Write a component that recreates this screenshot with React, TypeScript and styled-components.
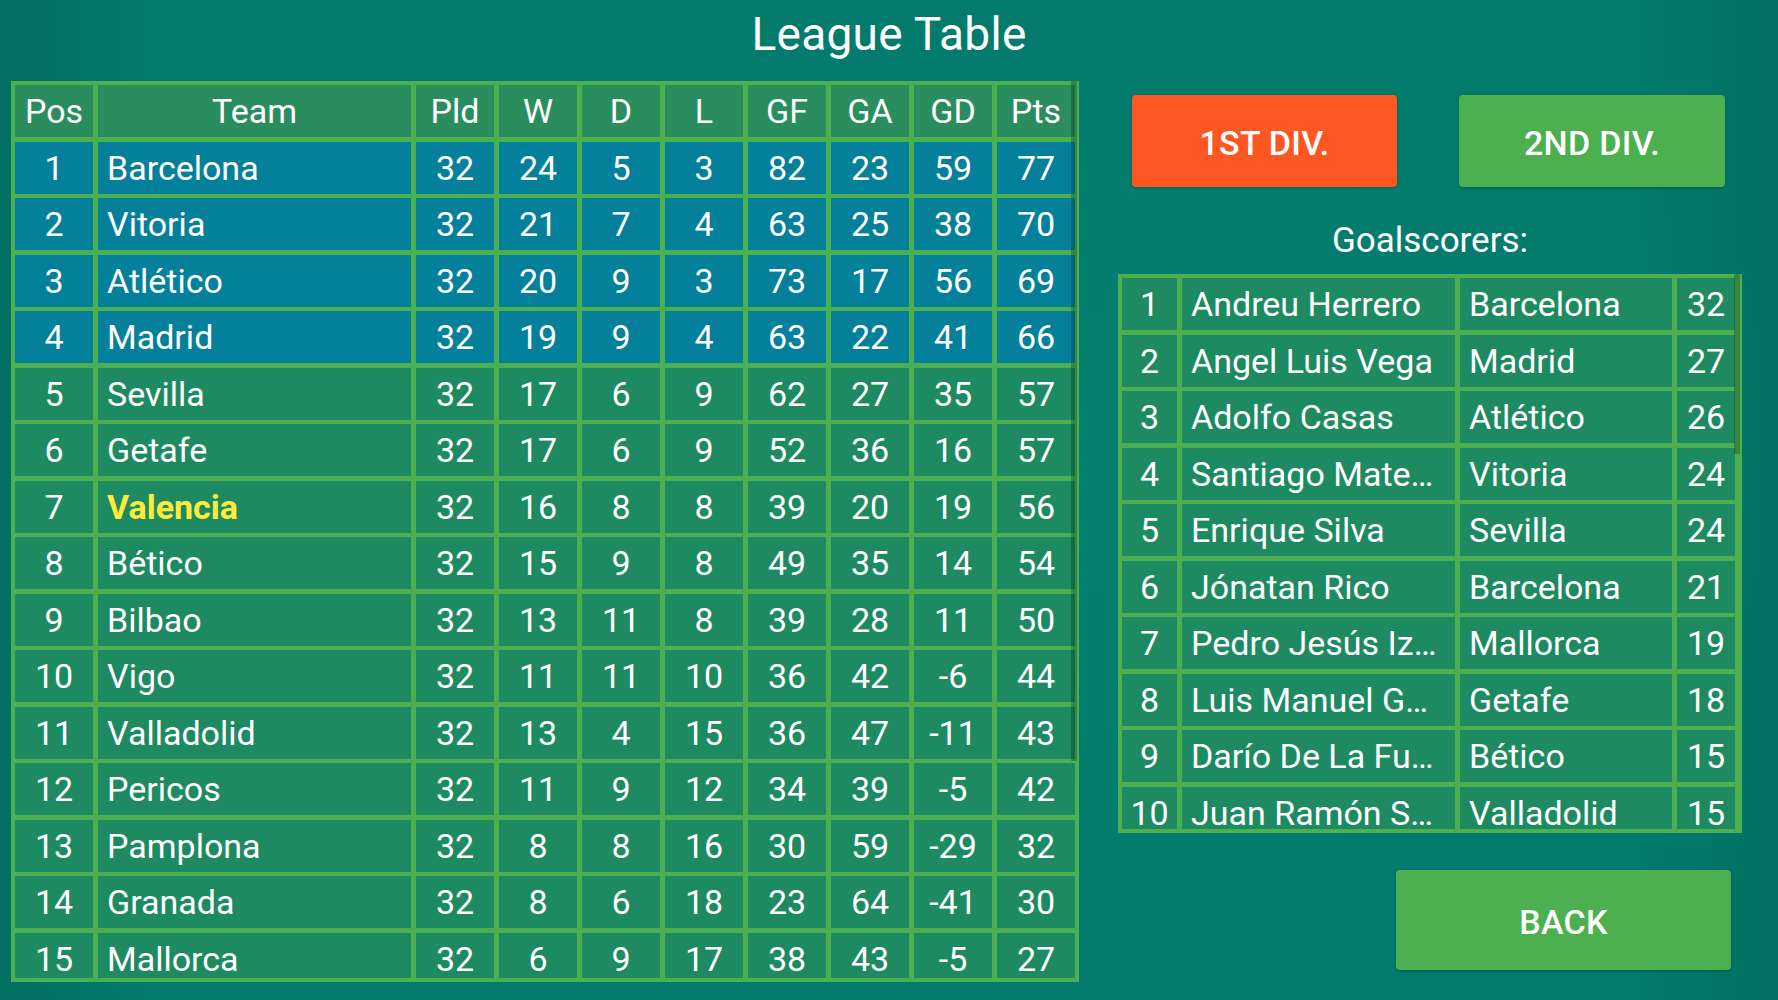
import React from "react";
import styled, { createGlobalStyle } from "styled-components";

const GlobalStyle = createGlobalStyle`
  html, body {
    margin: 0;
    padding: 0;
  }
  body {
    width: 1778px;
    height: 1000px;
    overflow: hidden;
    font-family: Roboto, "Noto Sans", "Liberation Sans", sans-serif;
    color: #ffffff;
    background-color: #027a6c;
    background-image:
      radial-gradient(ellipse at 55% 45%, rgba(20, 140, 120, 0.35) 0%, rgba(0, 0, 0, 0) 60%),
      linear-gradient(90deg, rgba(0, 40, 30, 0.12) 0%, rgba(0, 0, 0, 0) 8%, rgba(0, 0, 0, 0) 92%, rgba(0, 40, 30, 0.1) 100%);
  }
`;

const Page = styled.div`
  width: 1778px;
  height: 1000px;
  display: flex;
  flex-direction: column;
`;

const Title = styled.h1`
  margin: 0 0 13px 0;
  height: 68px;
  line-height: 68px;
  text-align: center;
  font-size: 46px;
  font-weight: 400;
  letter-spacing: 0.3px;
`;

const Content = styled.div`
  display: flex;
  align-items: flex-start;
  padding-left: 11px;
  gap: 39px;
`;

const Frame = styled.div`
  position: relative;
  padding: 4px;
  background: #4caf50;
`;

const Viewport = styled.div<{ $height: number }>`
  height: ${(p) => p.$height}px;
  overflow: hidden;
`;

const Grid = styled.div<{ $cols: string }>`
  display: grid;
  grid-template-columns: ${(p) => p.$cols};
  grid-auto-rows: 52px;
  column-gap: 5px;
  row-gap: 4.5px;
`;

type Variant = "header" | "top" | "normal";

const Cell = styled.div<{ $variant: Variant; $align?: "left" | "center"; $accent?: boolean }>`
  line-height: 52px;
  font-size: 34px;
  padding: 0 ${(p) => (p.$align === "left" ? "9px" : "0")};
  text-align: ${(p) => p.$align || "center"};
  white-space: nowrap;
  overflow: hidden;
  background: ${(p) =>
    p.$variant === "header" ? "#2a8d5e" : p.$variant === "top" ? "#04809a" : "#1d8a62"};
  color: ${(p) => (p.$accent ? "#ffeb3b" : "#ffffff")};
  font-weight: ${(p) => (p.$accent ? 700 : 400)};
`;

const ScrollThumb = styled.div<{ $length: number }>`
  position: absolute;
  top: 0;
  right: 2px;
  width: 6px;
  height: ${(p) => p.$length}px;
  background: rgba(0, 30, 20, 0.28);
  border-radius: 1px;
`;

const RightPanel = styled.div`
  width: 624px;
  display: flex;
  flex-direction: column;
`;

const ButtonRow = styled.div`
  display: flex;
  justify-content: space-between;
  padding: 14px 17px 0 14px;
`;

const Button = styled.button<{ $color: string; $w: number; $h: number }>`
  width: ${(p) => p.$w}px;
  height: ${(p) => p.$h}px;
  border: none;
  border-radius: 4px;
  background: ${(p) => p.$color};
  color: #ffffff;
  font-family: Roboto, "Noto Sans", "Liberation Sans", sans-serif;
  font-size: 34px;
  font-weight: 500;
  letter-spacing: 0.3px;
  box-shadow: 0 1px 3px rgba(0, 0, 0, 0.25);
  cursor: pointer;
  padding: 4px 0 0 0;
`;

const SectionLabel = styled.div`
  margin-top: 17px;
  height: 70px;
  line-height: 74px;
  text-align: center;
  font-size: 35px;
`;

const BackRow = styled.div`
  display: flex;
  justify-content: flex-end;
  padding-right: 11px;
  margin-top: 37px;
`;

const headers = ["Pos", "Team", "Pld", "W", "D", "L", "GF", "GA", "GD", "Pts"];

const teams: [number, string, number, number, number, number, number, number, number, number][] = [
  [1, "Barcelona", 32, 24, 5, 3, 82, 23, 59, 77],
  [2, "Vitoria", 32, 21, 7, 4, 63, 25, 38, 70],
  [3, "Atlético", 32, 20, 9, 3, 73, 17, 56, 69],
  [4, "Madrid", 32, 19, 9, 4, 63, 22, 41, 66],
  [5, "Sevilla", 32, 17, 6, 9, 62, 27, 35, 57],
  [6, "Getafe", 32, 17, 6, 9, 52, 36, 16, 57],
  [7, "Valencia", 32, 16, 8, 8, 39, 20, 19, 56],
  [8, "Bético", 32, 15, 9, 8, 49, 35, 14, 54],
  [9, "Bilbao", 32, 13, 11, 8, 39, 28, 11, 50],
  [10, "Vigo", 32, 11, 11, 10, 36, 42, -6, 44],
  [11, "Valladolid", 32, 13, 4, 15, 36, 47, -11, 43],
  [12, "Pericos", 32, 11, 9, 12, 34, 39, -5, 42],
  [13, "Pamplona", 32, 8, 8, 16, 30, 59, -29, 32],
  [14, "Granada", 32, 8, 6, 18, 23, 64, -41, 30],
  [15, "Mallorca", 32, 6, 9, 17, 38, 43, -5, 27],
];

const scorers: [number, string, string, number][] = [
  [1, "Andreu Herrero", "Barcelona", 32],
  [2, "Angel Luis Vega", "Madrid", 27],
  [3, "Adolfo Casas", "Atlético", 26],
  [4, "Santiago Mate…", "Vitoria", 24],
  [5, "Enrique Silva", "Sevilla", 24],
  [6, "Jónatan Rico", "Barcelona", 21],
  [7, "Pedro Jesús Iz…", "Mallorca", 19],
  [8, "Luis Manuel G…", "Getafe", 18],
  [9, "Darío De La Fu…", "Bético", 15],
  [10, "Juan Ramón S…", "Valladolid", 15],
];

const USER_TEAM = "Valencia";

export default function App() {
  return (
    <>
      <GlobalStyle />
      <Page>
        <Title>League Table</Title>
        <Content>
          <Frame>
            <Viewport $height={893}>
              <Grid $cols="78px 313px repeat(8, 78px)">
                {headers.map((h) => (
                  <Cell key={h} $variant="header">
                    {h}
                  </Cell>
                ))}
                {teams.map((row) => {
                  const variant: Variant = row[0] <= 4 ? "top" : "normal";
                  return row.map((v, i) => (
                    <Cell
                      key={`${row[0]}-${i}`}
                      $variant={variant}
                      $align={i === 1 ? "left" : "center"}
                      $accent={i === 1 && v === USER_TEAM}
                    >
                      {v}
                    </Cell>
                  ));
                })}
              </Grid>
            </Viewport>
            <ScrollThumb $length={680} />
          </Frame>
          <RightPanel>
            <ButtonRow>
              <Button $color="#ff5722" $w={265} $h={92}>
                1ST DIV.
              </Button>
              <Button $color="#4caf50" $w={266} $h={92}>
                2ND DIV.
              </Button>
            </ButtonRow>
            <SectionLabel>Goalscorers:</SectionLabel>
            <Frame>
              <Viewport $height={551}>
                <Grid $cols="55px 273px 212px 58px">
                  {scorers.map((s) =>
                    s.map((v, i) => (
                      <Cell
                        key={`${s[0]}-${i}`}
                        $variant="normal"
                        $align={i === 1 || i === 2 ? "left" : "center"}
                      >
                        {v}
                      </Cell>
                    ))
                  )}
                </Grid>
              </Viewport>
              <ScrollThumb $length={180} />
            </Frame>
            <BackRow>
              <Button $color="#4caf50" $w={335} $h={100}>
                BACK
              </Button>
            </BackRow>
          </RightPanel>
        </Content>
      </Page>
    </>
  );
}
